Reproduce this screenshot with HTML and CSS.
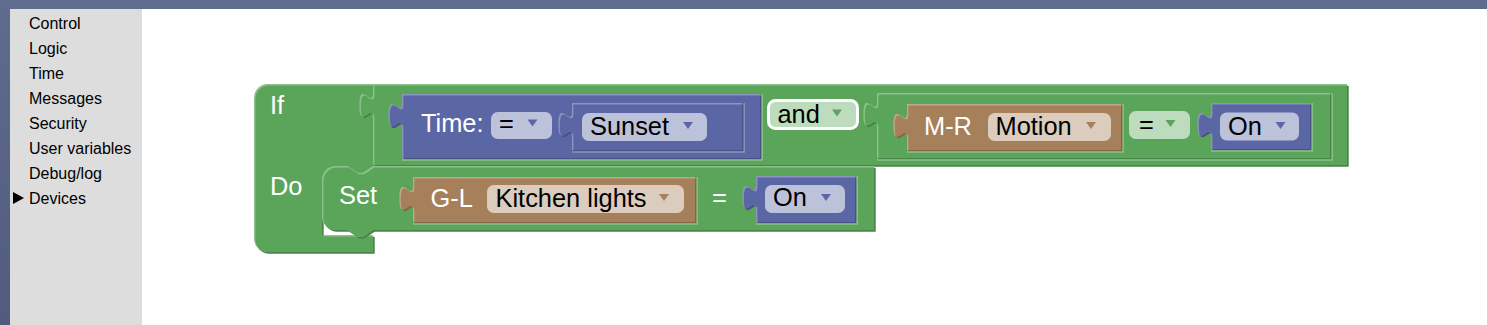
FILE: index.html
```html
<!DOCTYPE html>
<html>
<head>
<meta charset="utf-8">
<title>Rules editor</title>
<link rel="stylesheet" href="styles.css">
</head>
<body>
<div class="app">
  <div class="topbar"></div>
  <div class="main">
    <div class="gutter"></div>
    <nav class="toolbox">
      <div class="cat">Control</div>
      <div class="cat">Logic</div>
      <div class="cat">Time</div>
      <div class="cat">Messages</div>
      <div class="cat">Security</div>
      <div class="cat">User variables</div>
      <div class="cat">Debug/log</div>
      <div class="cat"><span class="caret"></span>Devices</div>
    </nav>
    <div class="workspace">
      <svg class="canvas" width="1345" height="316" viewBox="142 9 1345 316" xmlns="http://www.w3.org/2000/svg">
        <defs>
          <path id="p-if" d="M254,97.6 A13.6,13.6 0 0 1 267.6,84 H373 V92.5 c0,17 -13.6,-13.6 -13.6,12.75 s13.6,-4.25 13.6,12.75 V166 l-10.2,6.8 -5.1,0 -10.2,-6.8 H335.6 A13.6,13.6 0 0 0 322,179.6 V235 H373 V252 H267.6 A13.6,13.6 0 0 1 254,238.4 Z"/>
          <path id="p-and" d="M373,84 H1347 V165 H373 V118 C373,101 359.4,131.6 359.4,105.25 C359.4,78.9 373,109.5 373,92.5 Z"/>
          <path id="p-time" d="M402,94 H760 V158 H402 V128 C402,111 388.4,141.6 388.4,115.25 C388.4,88.9 402,119.5 402,102.5 Z"/>
          <path id="p-sun" d="M572,103 H742 V150 H572 V137 C572,120 558.4,150.6 558.4,124.25 C558.4,97.9 572,128.5 572,111.5 Z"/>
          <path id="p-cmp" d="M877,93 H1330 V158 H877 V127 C877,110 863.4,140.6 863.4,114.25 C863.4,87.9 877,118.5 877,101.5 Z"/>
          <path id="p-mr" d="M907,104 H1121 V150 H907 V138 C907,121 893.4,151.6 893.4,125.25 C893.4,98.9 907,129.5 907,112.5 Z"/>
          <path id="p-on1" d="M1211,103 H1310 V149 H1211 V137 C1211,120 1197.4,150.6 1197.4,124.25 C1197.4,97.9 1211,128.5 1211,111.5 Z"/>
          <path id="p-set" d="M322,179.6 A13.6,13.6 0 0 1 335.6,166 H347.5 l10.2,6.8 5.1,0 10.2,-6.8 H874 V230 H373 l-10.2,6.8 -5.1,0 -10.2,-6.8 H335.6 A13.6,13.6 0 0 1 322,216.4 Z"/>
          <path id="p-gl" d="M413,177 H695 V222 H413 V211 C413,194 399.4,224.6 399.4,198.25 C399.4,171.9 413,202.5 413,185.5 Z"/>
          <path id="p-on2" d="M756,176 H855 V222 H756 V210 C756,193 742.4,223.6 742.4,197.25 C742.4,170.9 756,201.5 756,184.5 Z"/>
          <clipPath id="c-if"><use href="#p-if"/></clipPath>
          <clipPath id="c-and"><use href="#p-and"/></clipPath>
          <clipPath id="c-time"><use href="#p-time"/></clipPath>
          <clipPath id="c-sun"><use href="#p-sun"/></clipPath>
          <clipPath id="c-cmp"><use href="#p-cmp"/></clipPath>
          <clipPath id="c-mr"><use href="#p-mr"/></clipPath>
          <clipPath id="c-on1"><use href="#p-on1"/></clipPath>
          <clipPath id="c-set"><use href="#p-set"/></clipPath>
          <clipPath id="c-gl"><use href="#p-gl"/></clipPath>
          <clipPath id="c-on2"><use href="#p-on2"/></clipPath>
        </defs>

        <!-- If block -->
        <use href="#p-if" class="g-dk" transform="translate(1.7 1.7)"/>
        <use href="#p-if" class="g-lt"/>
        <g clip-path="url(#c-if)"><use href="#p-if" class="g" transform="translate(1.4 1.4)"/></g>

        <!-- and block -->
        <use href="#p-and" class="g-dk" transform="translate(1.7 1.7)"/>
        <use href="#p-and" class="g-lt"/>
        <g clip-path="url(#c-and)"><use href="#p-and" class="g" transform="translate(1.4 1.4)"/></g>

        <!-- Time block -->
        <use href="#p-time" class="b-dk" transform="translate(1.7 1.7)"/>
        <use href="#p-time" class="b-lt"/>
        <g clip-path="url(#c-time)"><use href="#p-time" class="b" transform="translate(1.4 1.4)"/></g>

        <!-- Sunset block -->
        <use href="#p-sun" class="b-dk" transform="translate(1.7 1.7)"/>
        <use href="#p-sun" class="b-lt"/>
        <g clip-path="url(#c-sun)"><use href="#p-sun" class="b" transform="translate(1.4 1.4)"/></g>

        <!-- compare block -->
        <use href="#p-cmp" class="g-dk" transform="translate(1.7 1.7)"/>
        <use href="#p-cmp" class="g-lt"/>
        <g clip-path="url(#c-cmp)"><use href="#p-cmp" class="g" transform="translate(1.4 1.4)"/></g>

        <!-- M-R block -->
        <use href="#p-mr" class="r-dk" transform="translate(1.7 1.7)"/>
        <use href="#p-mr" class="r-lt"/>
        <g clip-path="url(#c-mr)"><use href="#p-mr" class="r" transform="translate(1.4 1.4)"/></g>

        <!-- On block 1 -->
        <use href="#p-on1" class="b-dk" transform="translate(1.7 1.7)"/>
        <use href="#p-on1" class="b-lt"/>
        <g clip-path="url(#c-on1)"><use href="#p-on1" class="b" transform="translate(1.4 1.4)"/></g>

        <!-- Set block -->
        <use href="#p-set" class="g-dk" transform="translate(1.7 1.7)"/>
        <use href="#p-set" class="g-lt"/>
        <g clip-path="url(#c-set)"><use href="#p-set" class="g" transform="translate(1.4 1.4)"/></g>

        <!-- G-L block -->
        <use href="#p-gl" class="r-dk" transform="translate(1.7 1.7)"/>
        <use href="#p-gl" class="r-lt"/>
        <g clip-path="url(#c-gl)"><use href="#p-gl" class="r" transform="translate(1.4 1.4)"/></g>

        <!-- On block 2 -->
        <use href="#p-on2" class="b-dk" transform="translate(1.7 1.7)"/>
        <use href="#p-on2" class="b-lt"/>
        <g clip-path="url(#c-on2)"><use href="#p-on2" class="b" transform="translate(1.4 1.4)"/></g>

        <!-- inline input hole highlights -->
        <path class="hl-g" d="M762.2,94 V160 H402"/>
        <path class="hl-g" d="M1332.2,93 V160 H877"/>
        <path class="hl-b" d="M744.2,103 V152 H572"/>
        <path class="hl-g" d="M1123.2,104 V152 H907"/>
        <path class="hl-g" d="M1312.2,103 V151 H1211"/>
        <path class="hl-g" d="M697.2,177 V224 H413"/>
        <path class="hl-g" d="M857.2,176 V224 H756"/>

        <!-- labels and fields -->
        <text class="t tw" x="270" y="114">If</text>
        <text class="t tw" x="270" y="195">Do</text>
        <text class="t tw" x="339" y="204">Set</text>

        <text class="t tw" x="421" y="132">Time:</text>
        <rect class="dd-b" x="491" y="112" width="61" height="27" rx="6.8"/>
        <text class="t tb" x="499" y="132">=</text>
        <polygon class="ar-b" points="527.5,119.5 537.5,119.5 532.5,126.5"/>

        <rect class="dd-b" x="582" y="113" width="125" height="28" rx="6.8"/>
        <text class="t tb" x="590" y="135">Sunset</text>
        <polygon class="ar-b" points="683,122 693,122 688,129"/>

        <rect class="dd-g dd-sel" x="768.5" y="100.5" width="89" height="28" rx="7"/>
        <text class="t tb" x="777.5" y="123">and</text>
        <polygon class="ar-g" points="832,109.5 842,109.5 837,116.5"/>

        <text class="t tw" x="924" y="135">M-R</text>
        <rect class="dd-r" x="988" y="113" width="123" height="28" rx="6.8"/>
        <text class="t tb" x="995.5" y="135">Motion</text>
        <polygon class="ar-r" points="1086,122 1096,122 1091,129"/>

        <rect class="dd-g" x="1129" y="111" width="61" height="28" rx="6.8"/>
        <text class="t tb" x="1139" y="133">=</text>
        <polygon class="ar-g" points="1165.5,120 1175.5,120 1170.5,127"/>

        <rect class="dd-b" x="1220" y="112.5" width="79" height="28" rx="6.8"/>
        <text class="t tb" x="1228" y="135">On</text>
        <polygon class="ar-b" points="1275.5,122 1285.5,122 1280.5,129"/>

        <text class="t tw" x="430.5" y="207">G-L</text>
        <rect class="dd-r" x="487" y="185" width="197" height="28" rx="6.8"/>
        <text class="t tb" x="495.5" y="207">Kitchen lights</text>
        <polygon class="ar-r" points="659,194 669,194 664,201"/>

        <text class="t tw" x="712" y="206">=</text>

        <rect class="dd-b" x="765" y="185" width="80" height="28" rx="6.8"/>
        <text class="t tb" x="773" y="206">On</text>
        <polygon class="ar-b" points="821,194 831,194 826,201"/>
      </svg>
    </div>
  </div>
</div>
</body>
</html>
```

FILE: styles.css
```css
html, body {
  margin: 0;
  padding: 0;
}

body {
  background: linear-gradient(#606c8d, #515c7c);
  overflow: hidden;
}

.app {
  display: flex;
  flex-direction: column;
  height: 325px;
}

.topbar {
  height: 9px;
  flex: none;
}

.main {
  display: flex;
  flex: 1;
  min-height: 0;
}

.gutter {
  width: 10px;
  flex: none;
}

.toolbox {
  width: 132px;
  flex: none;
  background: #dddddd;
  padding-top: 2px;
  font: 16px/25px "Liberation Sans", Arial, sans-serif;
  color: #000;
  box-sizing: border-box;
}

.cat {
  padding-left: 19px;
  white-space: nowrap;
}

.caret {
  display: inline-block;
  width: 0;
  height: 0;
  border-left: 11px solid #000;
  border-top: 6px solid transparent;
  border-bottom: 6px solid transparent;
  margin-left: -16px;
  margin-right: 5px;
}

.workspace {
  flex: 1;
  background: #ffffff;
  overflow: hidden;
}

.canvas {
  display: block;
}

/* block colours */
.g { fill: #5ba55b; }
.g-dk { fill: #498449; }
.g-lt { fill: #8cc08c; }

.b { fill: #5b67a5; }
.b-dk { fill: #495284; }
.b-lt { fill: #8c95c0; }

.r { fill: #a5805b; }
.r-dk { fill: #846649; }
.r-lt { fill: #c0a68c; }

.hl-g { fill: none; stroke: #8cc08c; stroke-width: 1.4; }
.hl-b { fill: none; stroke: #8c95c0; stroke-width: 1.4; }

/* fields */
.dd-b { fill: #bdc2db; }
.dd-r { fill: #dbccbd; }
.dd-g { fill: #bddbbd; }
.dd-sel { stroke: #ffffff; stroke-width: 3; }

.ar-b { fill: #5b67a5; }
.ar-r { fill: #a5805b; }
.ar-g { fill: #5ba55b; }

.t {
  font-family: "Liberation Sans", Arial, sans-serif;
  font-size: 25.4px;
}
.tw { fill: #ffffff; }
.tb { fill: #000000; }
```
